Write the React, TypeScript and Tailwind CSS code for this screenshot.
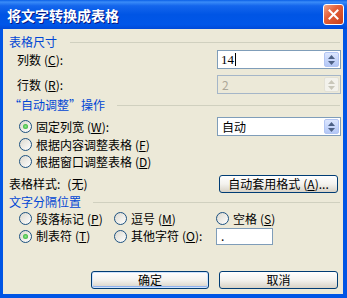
import React from "react";

function M({ c }: { c: string }) {
  return (
    <span className="ml-[3px]">
      (<span className="underline underline-offset-[1px]">{c}</span>)
    </span>
  );
}

function Spin({ disabled }: { disabled?: boolean }) {
  const col = disabled ? "#C9C7BA" : "#4D6185";
  return (
    <div
      className={
        disabled
          ? "w-[15px] h-full rounded-[2px] border border-[#E3E1D6] bg-[#F3F2EC] flex flex-col items-center justify-center gap-[2px]"
          : "w-[15px] h-full rounded-[2px] border border-[#B2C5F3] bg-gradient-to-b from-[#DCE6FE] to-[#B3C7F6] flex flex-col items-center justify-center gap-[2px]"
      }
    >
      <svg width="7" height="4" viewBox="0 0 7 4">
        <path d="M0 4 L3.5 0 L7 4 Z" fill={col} />
      </svg>
      <svg width="7" height="4" viewBox="0 0 7 4">
        <path d="M0 0 L3.5 4 L7 0 Z" fill={col} />
      </svg>
    </div>
  );
}

function Radio({ checked }: { checked?: boolean }) {
  return (
    <span className="w-[13px] h-[13px] rounded-full border border-[#1C5180] bg-gradient-to-br from-[#DCD9CF] to-white flex items-center justify-center shrink-0">
      {checked && (
        <span className="w-[5px] h-[5px] rounded-full bg-[radial-gradient(circle,#8BE88B_0%,#21A121_100%)]" />
      )}
    </span>
  );
}

function Header({ children, gap }: { children: React.ReactNode; gap: string }) {
  return (
    <div className="h-[14px] flex items-center">
      <span className="text-[#0046D5] whitespace-nowrap">{children}</span>
      <div className={`flex-1 h-px bg-[#D0D0BF] mr-[1px] ${gap}`} />
    </div>
  );
}

function XPButton({ children, w, isDefault }: { children: React.ReactNode; w: string; isDefault?: boolean }) {
  return (
    <div
      className={
        (isDefault
          ? "shadow-[inset_0_0_0_1px_#CEE2FC,inset_0_-1px_0_1px_#8FB1EE] "
          : "") +
        `${w} h-[18px] rounded-[3px] border border-[#003C74] bg-gradient-to-b from-white via-[#F3F2EE] to-[#D8D2C6] flex items-center justify-center text-black`
      }
    >
      {children}
    </div>
  );
}

export default function App() {
  return (
    <div
      lang="zh-CN"
      className="w-[347px] h-[298px] bg-[#0055E5] flex flex-col font-['Noto_Sans_CJK_SC','Noto_Sans',sans-serif] text-[12px] leading-none text-black select-none"
    >
      {/* Title bar */}
      <div className="h-[29px] shrink-0 flex items-center justify-between pl-[7px] pr-[3px] bg-[linear-gradient(to_bottom,#0A5FE6_0%,#3A8CF8_7%,#1466EC_20%,#0055E5_50%,#0056E8_85%,#0049D8_100%)]">
        <span className="text-white font-bold text-[14px] [text-shadow:1px_1px_0_#0A1883]">
          将文字转换成表格
        </span>
        <div className="w-[21px] h-[21px] rounded-[3px] border border-white bg-[linear-gradient(135deg,#F3A586_0%,#E3603A_40%,#C8401A_100%)] flex items-center justify-center">
          <svg width="11" height="11" viewBox="0 0 11 11">
            <path d="M1.5 1.5 L9.5 9.5 M9.5 1.5 L1.5 9.5" stroke="white" strokeWidth="2" strokeLinecap="square" />
          </svg>
        </div>
      </div>

      {/* Body */}
      <div className="flex-1 ml-[3px] mr-[4px] mb-[4px] bg-[#ECE9D8] flex flex-col pl-[6px] pr-[2px] pt-[6px]">
        <Header gap="ml-[13px]">表格尺寸</Header>

        <div className="mt-[1px] h-[19px] flex items-center pl-[8px]">
          <span className="flex-1">
            列数<M c="C" />:
          </span>
          <div className="w-[124px] h-full border border-[#7F9DB9] bg-white flex items-stretch p-[1px]">
            <div className="flex-1 flex items-center pl-[2px] font-['Liberation_Serif',serif] text-[13px]">
              14<span className="inline-block w-px h-[13px] bg-black ml-[1px]" />
            </div>
            <Spin />
          </div>
        </div>

        <div className="mt-[6px] h-[19px] flex items-center pl-[8px]">
          <span className="flex-1">
            行数<M c="R" />:
          </span>
          <div className="w-[124px] h-full border border-[#A5B6C8] bg-[#ECE9D8] flex items-stretch p-[1px]">
            <div className="flex-1 flex items-center pl-[3px] text-[#ACA899]">2</div>
            <Spin disabled />
          </div>
        </div>

        <div className="mt-[4px]">
          <Header gap="ml-[12px]">
            <span className="inline-block w-[12px] text-right">“</span>自动调整
            <span className="inline-block w-[12px] text-left">”</span>操作
          </Header>
        </div>

        <div className="mt-[5px] h-[19px] flex items-center pl-[10px]">
          <div className="flex-1 flex items-center gap-[4px]">
            <Radio checked />
            <span>
              固定列宽<M c="W" />:
            </span>
          </div>
          <div className="w-[124px] h-full border border-[#7F9DB9] bg-white flex items-stretch p-[1px]">
            <div className="flex-1 flex items-center pl-[3px]">自动</div>
            <Spin />
          </div>
        </div>

        <div className="h-[17px] flex items-center pl-[10px] gap-[4px]">
          <Radio />
          <span>
            根据内容调整表格<M c="F" />
          </span>
        </div>
        <div className="h-[17px] flex items-center pl-[10px] gap-[4px]">
          <Radio />
          <span>
            根据窗口调整表格<M c="D" />
          </span>
        </div>

        <div className="mt-[5px] h-[18px] flex items-center">
          <span className="flex-1">
            表格样式:<span className="ml-[7px]">(无)</span>
          </span>
          <div className="mr-[3px]">
            <XPButton w="w-[119px]">
              自动套用格式<M c="A" />...
            </XPButton>
          </div>
        </div>

        <div className="mt-[2px]">
          <Header gap="ml-[12px]">文字分隔位置</Header>
        </div>

        <div className="mt-[1px] h-[17px] flex items-center pl-[10px]">
          <div className="w-[95px] flex items-center gap-[4px]">
            <Radio />
            <span>
              段落标记<M c="P" />
            </span>
          </div>
          <div className="w-[102px] flex items-center gap-[4px]">
            <Radio />
            <span>
              逗号<M c="M" />
            </span>
          </div>
          <div className="flex items-center gap-[4px]">
            <Radio />
            <span>
              空格<M c="S" />
            </span>
          </div>
        </div>

        <div className="h-[18px] flex items-center pl-[10px]">
          <div className="w-[95px] flex items-center gap-[4px]">
            <Radio checked />
            <span>
              制表符<M c="T" />
            </span>
          </div>
          <div className="w-[102px] flex items-center gap-[4px]">
            <Radio />
            <span>
              其他字符<M c="O" />:
            </span>
          </div>
          <div className="w-[57px] h-[17px] border border-[#7F9DB9] bg-white flex items-center pl-[4px]">
            .
          </div>
        </div>

        <div className="mt-[26px] h-[18px] flex justify-end gap-[10px] mr-[3px]">
          <XPButton w="w-[118px]" isDefault>
            确定
          </XPButton>
          <XPButton w="w-[119px]">取消</XPButton>
        </div>
      </div>
    </div>
  );
}
